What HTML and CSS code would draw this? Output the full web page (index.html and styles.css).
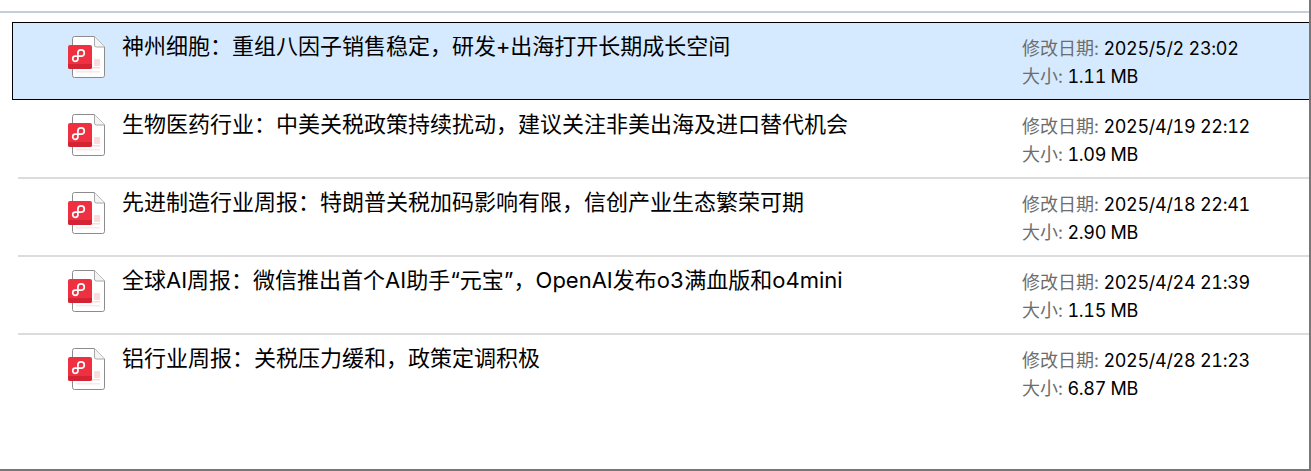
FILE: index.html
```html
<!DOCTYPE html>
<html lang="zh-CN">
<head>
  <meta charset="UTF-8" />
  <title>搜索结果</title>
  <link rel="stylesheet" href="styles.css">
</head>
<body>
  <svg class="defs" width="0" height="0">
    <symbol id="pdf-icon" viewBox="0 0 40 44">
      <path d="M7.5 1.5H27.5L37.5 12V40.5Q37.5 42.5 35.5 42.5H7.5Q5.5 42.5 5.5 40.5V3.5Q5.5 1.5 7.5 1.5Z" fill="#fff" stroke="#8c8c8c" stroke-width="1"/>
      <path d="M27.5 1.5V10Q27.5 12 29.5 12H37.5" fill="#f4f4f4" stroke="#a8a8a8" stroke-width="1"/>
      <rect x="27" y="24" width="6" height="7" rx="1" fill="#fbdcdc"/>
      <rect x="25" y="32" width="8" height="1.5" fill="#fbdcdc"/>
      <rect x="9" y="36" width="24" height="1.5" fill="#fde8e8"/>
      <rect x="1" y="10" width="24" height="24" rx="2" fill="#ee3040"/>
      <path d="M1 29H25V32Q25 34 23 34H3Q1 34 1 32Z" fill="#d42433"/>
      <path d="M10.9 25V18A3.2 3.2 0 1 1 14.1 21.2H8.3A2.6 2.6 0 1 0 10.9 23.8" fill="none" stroke="#fff" stroke-width="1.7"/>
    </symbol>
  </svg>

  <div class="window">
    <div class="top-line"></div>
    <ul class="results">
      <li class="row selected">
        <svg class="file-icon"><use href="#pdf-icon"/></svg>
        <div class="title">神州细胞：重组八因子销售稳定，研发+出海打开长期成长空间</div>
        <div class="meta">
          <div><span class="label">修改日期:</span> 2025/5/2 23:02</div>
          <div><span class="label">大小:</span> 1.11 MB</div>
        </div>
      </li>
      <li class="row">
        <svg class="file-icon"><use href="#pdf-icon"/></svg>
        <div class="title">生物医药行业：中美关税政策持续扰动，建议关注非美出海及进口替代机会</div>
        <div class="meta">
          <div><span class="label">修改日期:</span> 2025/4/19 22:12</div>
          <div><span class="label">大小:</span> 1.09 MB</div>
        </div>
      </li>
      <li class="row">
        <svg class="file-icon"><use href="#pdf-icon"/></svg>
        <div class="title">先进制造行业周报：特朗普关税加码影响有限，信创产业生态繁荣可期</div>
        <div class="meta">
          <div><span class="label">修改日期:</span> 2025/4/18 22:41</div>
          <div><span class="label">大小:</span> 2.90 MB</div>
        </div>
      </li>
      <li class="row">
        <svg class="file-icon"><use href="#pdf-icon"/></svg>
        <div class="title">全球AI周报：微信推出首个AI助手“元宝”，OpenAI发布o3满血版和o4mini</div>
        <div class="meta">
          <div><span class="label">修改日期:</span> 2025/4/24 21:39</div>
          <div><span class="label">大小:</span> 1.15 MB</div>
        </div>
      </li>
      <li class="row last">
        <svg class="file-icon"><use href="#pdf-icon"/></svg>
        <div class="title">铝行业周报：关税压力缓和，政策定调积极</div>
        <div class="meta">
          <div><span class="label">修改日期:</span> 2025/4/28 21:23</div>
          <div><span class="label">大小:</span> 6.87 MB</div>
        </div>
      </li>
    </ul>
  </div>
</body>
</html>
```

FILE: styles.css
```css
:root {
  --frame: #777777;
  --top-line: #c3cfde;
  --separator: #dcdcdc;
  --selected: #d6eaff;
  --label: #6d6d6d;
}

* {
  box-sizing: border-box;
}

html, body {
  margin: 0;
  height: 100%;
  overflow: hidden;
  background: #fff;
}

body {
  color: #000;
  font-family: Inter, "Noto Sans CJK SC", sans-serif;
  font-variant-numeric: tabular-nums;
}

.defs {
  display: block;
  height: 0;
}

.window {
  height: 471px;
  padding-top: 11px;
  border-right: 2px solid var(--frame);
  border-bottom: 2px solid var(--frame);
}

.top-line {
  height: 2px;
  background: var(--top-line);
}

.results {
  list-style: none;
  margin: 9px 0 0;
  padding: 0;
}

.row {
  display: flex;
  height: 78px;
  margin-left: 18px;
  padding: 12px 0 0 49px;
  border-bottom: 2px solid var(--separator);
}

.row.selected {
  margin: 0 0 1px 12px;
  padding: 12px 0 0 54px;
  background: var(--selected);
  border: 1px solid #000;
  border-right: 0;
}

.row.last {
  border-bottom: 0;
}

.file-icon {
  flex: none;
  width: 40px;
  height: 44px;
}

.title {
  flex: 1;
  margin: -2px 0 0 15px;
  font-size: 22px;
  line-height: 26px;
}

.meta {
  flex: none;
  width: 287px;
  font-size: 18px;
  line-height: 28px;
  letter-spacing: -0.3px;
}

.label {
  color: var(--label);
  letter-spacing: 0;
}
```
